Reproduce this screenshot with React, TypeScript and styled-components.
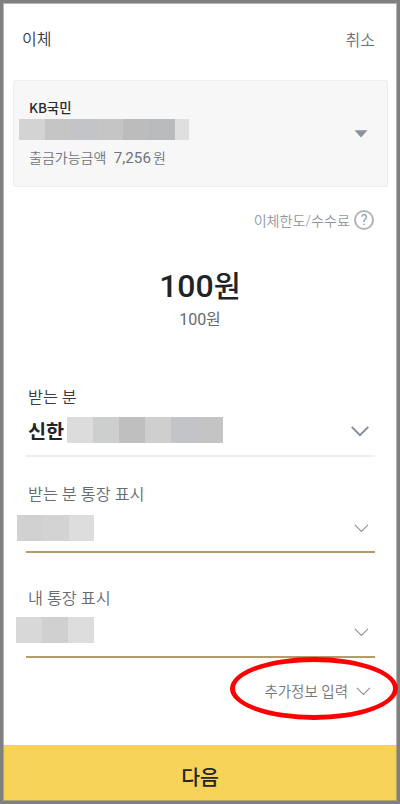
import React from 'react';
import styled, { createGlobalStyle } from 'styled-components';

const GlobalStyle = createGlobalStyle`
  * { box-sizing: border-box; }
  body {
    margin: 0;
    background: #808080;
    font-family: Roboto, "Noto Sans CJK KR", sans-serif;
  }
`;

const Screen = styled.main`
  position: relative;
  display: flex;
  flex-direction: column;
  width: 400px;
  height: 804px;
  padding: 3px;
  background: #808080;
`;

const Page = styled.div`
  display: flex;
  flex: 1;
  flex-direction: column;
  border: 1px solid #b4b4b4;
  border-bottom: 0;
  background: #fff;
`;

const Header = styled.header`
  display: flex;
  justify-content: space-between;
  height: 76px;
  padding: 24px 21px 0 18px;
`;

const Title = styled.h1`
  margin: 0;
  color: #37383c;
  font-size: 16px;
  font-weight: 350;
  line-height: 24px;
`;

const TextButton = styled.button`
  height: 25px;
  margin: 0;
  padding: 1px 0 0;
  border: 0;
  background: none;
  color: #6e7178;
  font: 350 16px/24px Roboto, "Noto Sans CJK KR", sans-serif;
`;

const AccountCard = styled.section`
  display: flex;
  align-items: center;
  justify-content: space-between;
  height: 107px;
  margin: 0 8px 0 9px;
  padding: 0 19px 3px 5px;
  border: 1px solid #eee;
  border-radius: 2px;
  background: #f7f7f7;
`;

const AccountInfo = styled.div`
  display: flex;
  flex-direction: column;
`;

const BankName = styled.strong`
  padding-left: 10px;
  color: #2b2c31;
  font-family: "Noto Sans CJK KR", sans-serif;
  font-size: 13.4px;
  font-weight: 500;
  line-height: 20px;
`;

const Balance = styled.p`
  display: flex;
  margin: 8px 0 0 10px;
  color: #70737b;
  font-size: 14px;
  font-weight: 350;
  line-height: 20px;
`;

const BalanceValue = styled.span`
  margin: 0 2px 0 7.5px;
  font-size: 15.2px;
  font-weight: 400;
`;

const Mask = styled.div<{ $height: number; $top?: number; $left?: number }>`
  display: flex;
  height: ${({ $height }) => $height}px;
  margin: ${({ $top = 0 }) => $top}px 0 0 ${({ $left = 0 }) => $left}px;
`;

const MaskBlock = styled.span<{ $color: string; $width?: number }>`
  width: ${({ $width = 26 }) => $width}px;
  background: ${({ $color }) => $color};
`;

const LimitRow = styled.div`
  display: flex;
  align-items: center;
  justify-content: flex-end;
  gap: 4px;
  height: 24px;
  margin-top: 21px;
  padding-right: 22px;
  color: #9397a1;
  font-size: 14.1px;
  font-weight: 350;
`;

const HelpMark = styled.span`
  display: flex;
  align-items: center;
  justify-content: center;
  width: 20px;
  height: 20px;
  border: 2px solid #b0b4bd;
  border-radius: 50%;
  font-size: 14px;
  font-weight: 400;
  line-height: 18px;
`;

const Amount = styled.section`
  display: flex;
  flex-direction: column;
  align-items: center;
  height: 152px;
  padding-top: 32px;
`;

const AmountValue = styled.strong`
  color: #222328;
  font-size: 32px;
  font-weight: 500;
  line-height: 44px;
`;

const Currency = styled.span`
  font-size: 29.5px;
`;

const AmountNote = styled.span`
  color: #666970;
  font-size: 16px;
  font-weight: 400;
  line-height: 22px;
`;

const Field = styled.section<{ $line: string; $height: number; $top?: number }>`
  height: ${({ $height }) => $height}px;
  margin: 0 21px 0 22px;
  padding-top: ${({ $top = 0 }) => $top}px;
  border-bottom: 2px solid ${({ $line }) => $line};
`;

const FieldLabel = styled.div<{ $strong?: boolean }>`
  padding-left: 2px;
  color: ${({ $strong }) => ($strong ? '#3a3b40' : '#686b72')};
  font-size: 16.25px;
  font-weight: 350;
  line-height: 24px;
`;

const FieldValue = styled.div`
  display: flex;
  align-items: flex-start;
  height: 40px;
`;

const Recipient = styled.strong`
  width: 41px;
  padding-left: 2px;
  color: #222328;
  font-size: 19.7px;
  font-weight: 700;
  line-height: 46px;
`;

const Arrow = styled.svg<{ $top: number; $right: number }>`
  flex: none;
  margin: ${({ $top }) => $top}px ${({ $right }) => $right}px 0 0;
`;

const Spacer = styled.span`
  flex: 1;
`;

const MoreRow = styled.div`
  display: flex;
  align-items: center;
  justify-content: flex-end;
  gap: 8px;
  height: 24px;
  margin-top: 20px;
  padding-right: 25px;
  color: #73767d;
  font-size: 14.5px;
  font-weight: 350;
`;

const NextButton = styled.button`
  height: 56px;
  margin: auto -1px 0;
  padding: 6px 0 0;
  border: solid #b5a36c;
  border-width: 0 1px 1px;
  background: #f8d359;
  color: #24252a;
  font: 500 20.5px/40px "Noto Sans CJK KR", sans-serif;
`;

const Highlight = styled.div`
  position: absolute;
  top: 657px;
  left: 230px;
  width: 168px;
  height: 63px;
  border: 5px solid #f00;
  border-radius: 50%;
`;

function Chevron({ large = false, top = 0, right = 0 }: { large?: boolean; top?: number; right?: number }) {
  return large ? (
    <Arrow $top={top} $right={right} width="18" height="11" viewBox="0 0 18 11">
      <path d="M.7 .8 9 9.2 17.3 .8" fill="none" stroke="#848b98" strokeWidth="1.9" />
    </Arrow>
  ) : (
    <Arrow $top={top} $right={right} width="15" height="9" viewBox="0 0 15 9">
      <path d="M.9 .8 7.4 7.4 13.9 .8" fill="none" stroke="#8b919d" strokeWidth="1.1" />
    </Arrow>
  );
}

function MaskedText({ colors, height, top, left, widths = [] }: {
  colors: string[];
  height: number;
  top?: number;
  left?: number;
  widths?: number[];
}) {
  return (
    <Mask $height={height} $top={top} $left={left}>
      {colors.map((color, i) => (
        <MaskBlock key={i} $color={color} $width={widths[i]} />
      ))}
    </Mask>
  );
}

export default function App() {
  return (
    <Screen>
      <GlobalStyle />
      <Page>
        <Header>
          <Title>이체</Title>
          <TextButton>취소</TextButton>
        </Header>

        <AccountCard>
          <AccountInfo>
            <BankName>KB국민</BankName>
            <MaskedText
              height={21}
              top={2}
              colors={['#d3d3d3', '#c5c5c5', '#c1c3c6', '#c5c5c5', '#bcbcbc', '#b9babc', '#dfdfdf']}
              widths={[26, 26, 26, 26, 26, 26, 14]}
            />
            <Balance>
              출금가능금액<BalanceValue>7,256</BalanceValue>원
            </Balance>
          </AccountInfo>
          <Arrow $top={3} $right={0} width="14" height="8" viewBox="0 0 14 8">
            <path d="M.5 .3h13L7 7.5z" fill="#8b919d" />
          </Arrow>
        </AccountCard>

        <LimitRow>
          이체한도/수수료
          <HelpMark>?</HelpMark>
        </LimitRow>

        <Amount>
          <AmountValue>
            100<Currency>원</Currency>
          </AmountValue>
          <AmountNote>100원</AmountNote>
        </Amount>

        <Field $line="#eeeeee" $height={73} $top={2}>
          <FieldLabel $strong>받는 분</FieldLabel>
          <FieldValue>
            <Recipient>신한</Recipient>
            <MaskedText
              height={26}
              top={7}
              colors={['#dcdcdc', '#cdcfcf', '#bfbfbf', '#cfcfcf', '#c2c4c7', '#c4c4c4']}
            />
            <Spacer />
            <Chevron large top={16} right={6} />
          </FieldValue>
        </Field>

        <Field $line="#b49b6a" $height={96} $top={26}>
          <FieldLabel>받는 분 통장 표시</FieldLabel>
          <FieldValue>
            <MaskedText height={26} top={8} left={-9} widths={[26, 26, 25]} colors={['#d1d1d1', '#d3d3d3', '#dddddd']} />
            <Spacer />
            <Chevron top={17} right={6} />
          </FieldValue>
        </Field>

        <Field $line="#b49b6a" $height={105} $top={34}>
          <FieldLabel>내 통장 표시</FieldLabel>
          <FieldValue>
            <MaskedText height={26} top={6} left={-10} colors={['#d8d8d8', '#d0d0d0', '#dddddd']} />
            <Spacer />
            <Chevron top={17} right={6} />
          </FieldValue>
        </Field>

        <MoreRow>
          추가정보 입력
          <Chevron top={2} />
        </MoreRow>

        <NextButton>다음</NextButton>
      </Page>
      <Highlight />
    </Screen>
  );
}
